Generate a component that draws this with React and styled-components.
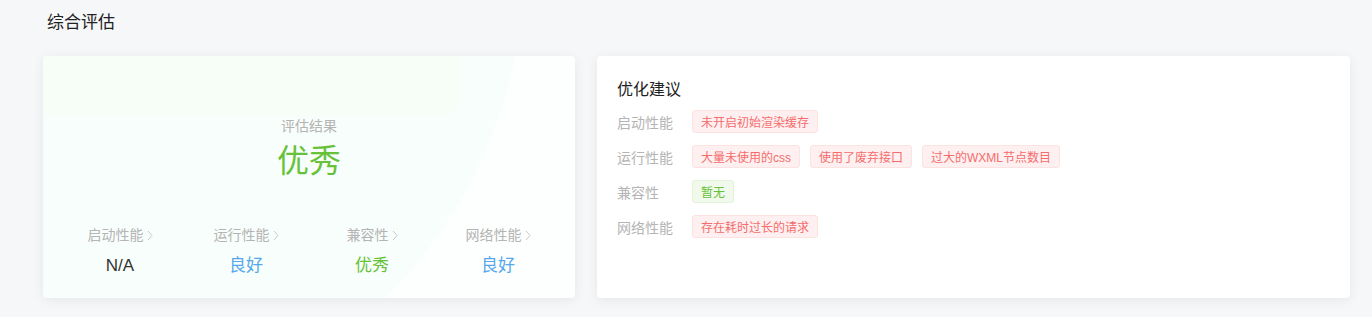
import React from "react";
import styled, { createGlobalStyle } from "styled-components";

const GlobalStyle = createGlobalStyle`
  body {
    margin: 0;
    background: #f6f7f9;
    font-family: "Liberation Sans", "Noto Sans CJK SC", sans-serif;
  }
`;

const stats = [
  { label: "启动性能", value: "N/A", tone: "none" },
  { label: "运行性能", value: "良好", tone: "good" },
  { label: "兼容性", value: "优秀", tone: "great" },
  { label: "网络性能", value: "良好", tone: "good" },
];

const advice = [
  { label: "启动性能", tags: [{ text: "未开启初始渲染缓存", type: "danger" }] },
  {
    label: "运行性能",
    tags: [
      { text: "大量未使用的css", type: "danger" },
      { text: "使用了废弃接口", type: "danger" },
      { text: "过大的WXML节点数目", type: "danger" },
    ],
  },
  { label: "兼容性", tags: [{ text: "暂无", type: "success" }] },
  { label: "网络性能", tags: [{ text: "存在耗时过长的请求", type: "danger" }] },
];

const toneColor = {
  none: "#333333",
  good: "#55a8ec",
  great: "#67c23a",
};

export default function App() {
  return (
    <>
      <GlobalStyle />
      <Page>
        <Heading>综合评估</Heading>
        <Cards>
          <ResultCard>
            <CircleDeco />
            <RectDeco />
            <ResultMain>
              <ResultLabel>评估结果</ResultLabel>
              <ResultValue>优秀</ResultValue>
            </ResultMain>
            <StatRow>
              {stats.map((s) => (
                <Stat key={s.label}>
                  <StatLabel>
                    {s.label}
                    <Chevron viewBox="0 0 6 11">
                      <path d="M1 1 L5 5.5 L1 10" fill="none" stroke="#c8c8c8" strokeWidth="1" />
                    </Chevron>
                  </StatLabel>
                  <StatValue tone={s.tone}>{s.value}</StatValue>
                </Stat>
              ))}
            </StatRow>
          </ResultCard>
          <AdviceCard>
            <AdviceTitle>优化建议</AdviceTitle>
            <AdviceList>
              {advice.map((row) => (
                <AdviceRow key={row.label}>
                  <AdviceLabel>{row.label}</AdviceLabel>
                  <TagList>
                    {row.tags.map((t) => (
                      <Tag key={t.text} type={t.type}>
                        {t.text}
                      </Tag>
                    ))}
                  </TagList>
                </AdviceRow>
              ))}
            </AdviceList>
          </AdviceCard>
        </Cards>
      </Page>
    </>
  );
}

const Page = styled.div`
  padding: 12px 22px 19px 43px;
`;

const Heading = styled.h3`
  margin: 0 0 0 4px;
  font-size: 17px;
  font-weight: normal;
  color: #222;
  line-height: 22px;
`;

const Cards = styled.div`
  display: flex;
  gap: 22px;
  margin-top: 22px;
`;

const Card = styled.div`
  background: #fff;
  border-radius: 4px;
  box-shadow: 0 2px 12px rgba(0, 0, 0, 0.07);
  height: 242px;
  box-sizing: border-box;
  position: relative;
  overflow: hidden;
`;

const ResultCard = styled(Card)`
  width: 532px;
  flex: none;
  display: flex;
  flex-direction: column;
  padding: 0 14px;
  background: #fdfffe;
`;

const CircleDeco = styled.div`
  position: absolute;
  width: 974px;
  height: 974px;
  border-radius: 50%;
  left: -491px;
  top: -587px;
  background: #f8fefb;
  pointer-events: none;
`;

const RectDeco = styled.div`
  position: absolute;
  left: 0;
  top: 0;
  width: 417px;
  height: 60px;
  border-bottom-right-radius: 18px;
  background: rgba(246, 253, 242, 0.45);
  pointer-events: none;
`;

const ResultMain = styled.div`
  position: relative;
  display: flex;
  flex-direction: column;
  align-items: center;
  padding-top: 61px;
  height: 170px;
  box-sizing: border-box;
`;

const ResultLabel = styled.div`
  font-size: 14px;
  color: #b4b4b4;
  line-height: 18px;
`;

const ResultValue = styled.div`
  font-size: 32px;
  color: #67c23a;
  line-height: 36px;
  margin-top: 8px;
`;

const StatRow = styled.div`
  position: relative;
  display: grid;
  grid-template-columns: repeat(4, 1fr);
`;

const Stat = styled.div`
  display: flex;
  flex-direction: column;
  align-items: center;
`;

const StatLabel = styled.div`
  display: flex;
  align-items: center;
  gap: 3px;
  font-size: 14px;
  color: #b4b4b4;
  line-height: 18px;
`;

const Chevron = styled.svg`
  width: 6px;
  height: 11px;
`;

const StatValue = styled.div`
  margin-top: 10px;
  font-size: 17px;
  line-height: 24px;
  color: ${({ tone }) => toneColor[tone]};
`;

const AdviceCard = styled(Card)`
  flex: 1;
  padding: 23px 20px;
`;

const AdviceTitle = styled.div`
  font-size: 16px;
  color: #222;
  line-height: 22px;
`;

const AdviceList = styled.div`
  margin-top: 9px;
  display: flex;
  flex-direction: column;
  gap: 12px;
`;

const AdviceRow = styled.div`
  display: flex;
  align-items: center;
`;

const AdviceLabel = styled.div`
  width: 75px;
  flex: none;
  font-size: 14px;
  color: #b4b4b4;
`;

const TagList = styled.div`
  display: flex;
  gap: 10px;
`;

const Tag = styled.span`
  display: inline-flex;
  align-items: center;
  height: 23px;
  box-sizing: border-box;
  padding: 0 8px;
  border-radius: 3px;
  font-size: 12px;
  border: 1px solid ${({ type }) => (type === "success" ? "#e1f3d8" : "#fde2e2")};
  background: ${({ type }) => (type === "success" ? "#f0f9eb" : "#fef0f0")};
  color: ${({ type }) => (type === "success" ? "#67c23a" : "#f56c6c")};
`;
